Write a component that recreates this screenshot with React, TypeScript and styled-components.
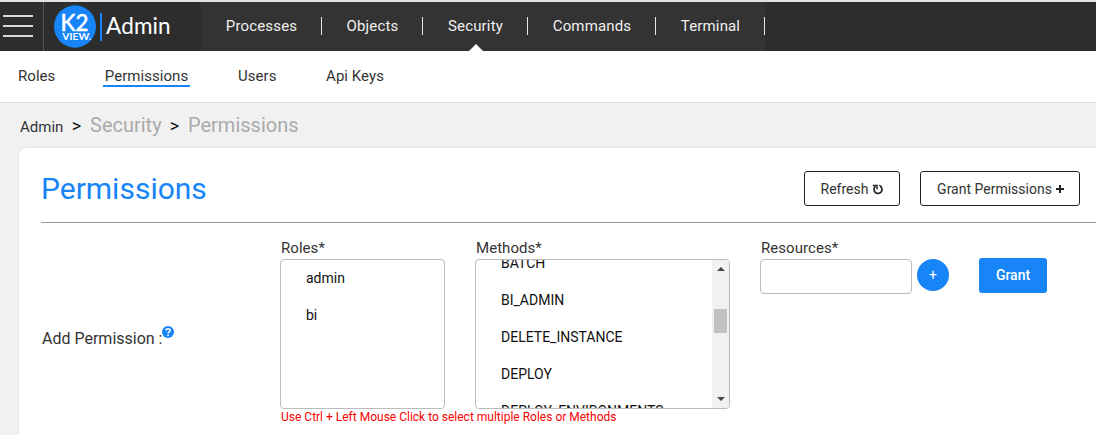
import React from "react";
import styled, { createGlobalStyle } from "styled-components";

const Global = createGlobalStyle`
  * { box-sizing: border-box; }
  body { margin: 0; background: #f1f1f1; font-family: Roboto, "Liberation Sans", sans-serif; color: #333; overflow: hidden; }
`;

const Page = styled.div`
  height: 435px;
  display: flex;
  flex-direction: column;
  overflow: hidden;
`;

const Header = styled.header`
  height: 51px;
  flex: none;
  display: flex;
  background: #2d2d2d;
  border-top: 2px solid #e3e3e3;
`;

const MenuButton = styled.button`
  width: 44px;
  height: 49px;
  padding: 13px 0 0 3px;
  border: 0;
  border-right: 1px solid #555;
  background: none;
  display: flex;
  flex-direction: column;
  gap: 8px;
`;

const Bar = styled.span`
  width: 30px;
  height: 2px;
  background: #d8d8d8;
`;

const Brand = styled.div`
  width: 157px;
  display: flex;
  align-items: center;
  padding-left: 10px;
`;

const Logo = styled.svg`
  width: 42px;
  height: 43px;
  flex: none;
`;

const BrandRule = styled.span`
  width: 2px;
  height: 28px;
  margin-left: 4px;
  background: #1785f7;
`;

const BrandName = styled.span`
  margin-left: 4px;
  padding-bottom: 2px;
  font: 400 22.5px/28px Lato, sans-serif;
  letter-spacing: 0.15px;
  color: #fff;
`;

const MainNav = styled.nav`
  display: flex;
  background: #333;
`;

const NavItem = styled.a<{ $width: number; $active?: boolean }>`
  width: ${(p) => p.$width}px;
  height: 49px;
  position: relative;
  display: flex;
  align-items: center;
  justify-content: center;
  padding-bottom: 2px;
  font-size: 15px;
  letter-spacing: 0.15px;
  color: #f0f0f0;
  background: linear-gradient(#e8e8e8, #e8e8e8) right 0 top 15px / 1px 18px no-repeat;
  &::after {
    content: "";
    display: ${(p) => (p.$active ? "block" : "none")};
    position: absolute;
    bottom: 0;
    left: 46px;
    border: 7px solid transparent;
    border-top: 0;
    border-bottom-color: #fff;
  }
`;

const SubNav = styled.nav`
  height: 52px;
  flex: none;
  display: flex;
  gap: 48px;
  padding: 14px 0 0 18px;
  background: #fff;
  border-bottom: 1px solid #e0e0e0;
`;

const SubItem = styled.a<{ $active?: boolean; $width: number }>`
  width: ${(p) => p.$width}px;
  height: 22px;
  text-align: center;
  white-space: nowrap;
  font-size: 15px;
  line-height: 22px;
  letter-spacing: 0.05px;
  color: #333;
  border-bottom: ${(p) => (p.$active ? "2px solid #1785f7" : "0")};
`;

const Crumbs = styled.div`
  height: 45px;
  flex: none;
  display: flex;
  align-items: baseline;
  padding: 10px 0 0 20px;
`;

const CrumbRoot = styled.span`
  width: 43px;
  font-size: 15px;
  line-height: 24px;
`;

const Chevron = styled.span`
  width: 27px;
  text-align: center;
  font: 400 18px/24px Roboto, sans-serif;
  color: #111;
`;

const Crumb = styled.span<{ $width: number }>`
  width: ${(p) => p.$width}px;
  white-space: nowrap;
  font-size: 20px;
  line-height: 24px;
  color: #aaa;
`;

const Card = styled.main`
  flex: 1;
  margin-left: 19px;
  padding-left: 22px;
  background: #fff;
  border-radius: 8px 0 0 0;
  box-shadow: 0 0 2px rgba(0, 0, 0, 0.14);
`;

const TitleRow = styled.div`
  height: 75px;
  display: flex;
  padding: 23px 16px 0 0;
  border-bottom: 1px solid #999;
`;

const Title = styled.h1`
  margin: 0;
  flex: 1;
  font-size: 30px;
  font-weight: 400;
  line-height: 36px;
  color: #1785f7;
`;

const OutlineButton = styled.button<{ $width: number }>`
  width: ${(p) => p.$width}px;
  height: 35px;
  margin-left: 20px;
  padding: 0 0 0 1px;
  display: flex;
  align-items: center;
  justify-content: center;
  gap: 4px;
  border: 1px solid #222;
  border-radius: 3px;
  background: #fff;
  font: 400 14px/20px Roboto, sans-serif;
  color: #333;
`;

const Form = styled.form`
  display: flex;
  padding-top: 16px;
`;

const FormLabel = styled.div`
  width: 239px;
  padding: 89px 0 0 1px;
  display: flex;
  font-size: 16px;
  line-height: 22px;
`;

const HelpIcon = styled.svg`
  width: 12px;
  height: 12px;
  margin-top: -2px;
`;

const Selectors = styled.div`
  width: 450px;
  margin-right: 30px;
`;

const SelectorRow = styled.div`
  display: flex;
  gap: 30px;
`;

const Field = styled.div<{ $width: number }>`
  width: ${(p) => p.$width}px;
`;

const FieldLabel = styled.label`
  display: block;
  height: 20px;
  padding-left: 1px;
  font-size: 15px;
  line-height: 18px;
  letter-spacing: 0.05px;
  white-space: nowrap;
`;

const ListBox = styled.div`
  height: 150px;
  display: flex;
  border: 1px solid #bbb;
  border-radius: 4px;
  overflow: hidden;
  background: #fff;
`;

const Options = styled.div<{ $offset: number }>`
  flex: 1;
  height: 148px;
  overflow: hidden;
  &::before {
    content: "";
    display: block;
    margin-top: ${(p) => p.$offset}px;
  }
`;

const Option = styled.div`
  height: 37px;
  padding-left: 25px;
  font-size: 14px;
  line-height: 37px;
  color: #111;
`;

const ScrollTrack = styled.div`
  width: 17px;
  height: 148px;
  padding: 7px 0;
  display: flex;
  flex-direction: column;
  align-items: center;
  background: #f1f1f1;
`;

const Arrow = styled.svg`
  width: 8px;
  height: 4px;
`;

const Thumb = styled.div`
  width: 13px;
  height: 24px;
  margin: 38px 0 auto;
  background: #c1c1c1;
`;

const Hint = styled.div`
  padding-left: 1px;
  font-size: 12px;
  line-height: 16px;
  color: #ff0000;
`;

const ResourceInput = styled.input`
  display: block;
  width: 152px;
  height: 35px;
  border: 1px solid #bbb;
  border-radius: 4px;
  background: #fff;
`;

const AddButton = styled.button`
  width: 32px;
  height: 32px;
  margin: 20px 0 0 5px;
  padding: 0;
  border: 0;
  border-radius: 50%;
  background: #1785f7;
  color: #fff;
  font: 400 14px/32px Roboto, sans-serif;
`;

const GrantButton = styled.button`
  width: 68px;
  height: 35px;
  margin: 19px 0 0 30px;
  padding: 0;
  border: 0;
  border-radius: 3px;
  background: #1785f7;
  color: #fff;
  font: 500 14px/35px Roboto, sans-serif;
`;

const Glyph = styled.svg<{ $size: number }>`
  width: ${(p) => p.$size}px;
  height: ${(p) => p.$size}px;
`;

const NAV = [
  { label: "Processes", width: 121 },
  { label: "Objects", width: 101 },
  { label: "Security", width: 105, active: true },
  { label: "Commands", width: 128 },
  { label: "Terminal", width: 109 },
];

const SUB = [
  { label: "Roles", width: 37 },
  { label: "Permissions", width: 87, active: true },
  { label: "Users", width: 38 },
  { label: "Api Keys", width: 62 },
];

const METHODS = ["BATCH", "BI_ADMIN", "DELETE_INSTANCE", "DEPLOY", "DEPLOY_ENVIRONMENTS"];

export default function App() {
  return (
    <Page>
      <Global />
      <Header>
        <MenuButton aria-label="Menu">
          <Bar />
          <Bar />
          <Bar />
        </MenuButton>
        <Brand>
          <Logo viewBox="0 0 42 43">
            <ellipse cx="21" cy="21.5" rx="21" ry="21.2" fill="#1785f7" />
            <text x="6.5" y="25.5" fontFamily="Lato" fontSize="23.5" fontWeight="500" textLength="28" lengthAdjust="spacingAndGlyphs" fill="#fff" stroke="#fff" strokeWidth="0.4">K2</text>
            <text x="8.3" y="35" fontFamily="Lato" fontSize="9.8" fontWeight="700" textLength="29" lengthAdjust="spacingAndGlyphs" fill="#fff">VIEW.</text>
          </Logo>
          <BrandRule />
          <BrandName>Admin</BrandName>
        </Brand>
        <MainNav>
          {NAV.map((n) => (
            <NavItem key={n.label} $width={n.width} $active={n.active}>{n.label}</NavItem>
          ))}
        </MainNav>
      </Header>
      <SubNav>
        {SUB.map((s) => (
          <SubItem key={s.label} $width={s.width} $active={s.active}>{s.label}</SubItem>
        ))}
      </SubNav>
      <Crumbs>
        <CrumbRoot>Admin</CrumbRoot>
        <Chevron>&gt;</Chevron>
        <Crumb $width={71}>Security</Crumb>
        <Chevron>&gt;</Chevron>
        <Crumb $width={112}>Permissions</Crumb>
      </Crumbs>
      <Card>
        <TitleRow>
          <Title>Permissions</Title>
          <OutlineButton $width={96}>
            Refresh
            <Glyph $size={12} viewBox="0 0 12 12" fill="none" stroke="#222" strokeWidth="1.7">
              <path d="M3.4 3.4A4 4 0 1 0 8.2 3.1" />
              <path d="M0.8 2.6H5V6.2" strokeWidth="1.5" />
              <path d="M7.2 2.2L9.6 3.6" strokeWidth="1.3" />
            </Glyph>
          </OutlineButton>
          <OutlineButton $width={160}>
            Grant Permissions
            <Glyph $size={8} viewBox="0 0 8 8" stroke="#222" strokeWidth="2">
              <path d="M4 0V8M0 4H8" />
            </Glyph>
          </OutlineButton>
        </TitleRow>
        <Form>
          <FormLabel>
            Add Permission :
            <HelpIcon viewBox="0 0 12 12">
              <circle cx="6" cy="6" r="6" fill="#1785f7" />
              <path d="M4 4.6C4 2.1 8.1 2.1 8.1 4.4C8.1 5.8 6.1 5.8 6.1 7.3M6.1 8.4V9.9" fill="none" stroke="#fff" strokeWidth="1.6" />
            </HelpIcon>
          </FormLabel>
          <Selectors>
            <SelectorRow>
              <Field $width={165}>
                <FieldLabel>Roles*</FieldLabel>
                <ListBox>
                  <Options $offset={0}>
                    <Option>admin</Option>
                    <Option>bi</Option>
                  </Options>
                </ListBox>
              </Field>
              <Field $width={255}>
                <FieldLabel>Methods*</FieldLabel>
                <ListBox>
                  <Options $offset={-15}>
                    {METHODS.map((m) => (
                      <Option key={m}>{m}</Option>
                    ))}
                  </Options>
                  <ScrollTrack>
                    <Arrow viewBox="0 0 8 4"><path d="M0 4L4 0L8 4Z" fill="#444" /></Arrow>
                    <Thumb />
                    <Arrow viewBox="0 0 8 4"><path d="M0 0L4 4L8 0Z" fill="#444" /></Arrow>
                  </ScrollTrack>
                </ListBox>
              </Field>
            </SelectorRow>
            <Hint>Use Ctrl + Left Mouse Click to select multiple Roles or Methods</Hint>
          </Selectors>
          <Field $width={152}>
            <FieldLabel>Resources*</FieldLabel>
            <ResourceInput />
          </Field>
          <AddButton type="button">+</AddButton>
          <GrantButton type="button">Grant</GrantButton>
        </Form>
      </Card>
    </Page>
  );
}
